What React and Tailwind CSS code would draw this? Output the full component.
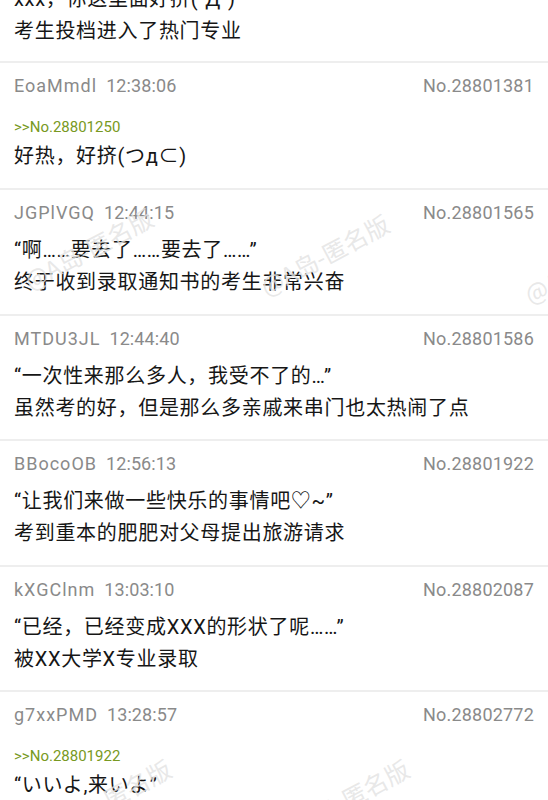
import React from "react";

const posts = [
  {
    name: "Hidden0",
    time: "12:30:00",
    no: "No.28801250",
    body: ["xxx，你这里面好挤(´Д`)", "考生投档进入了热门专业"],
    first: true,
  },
  {
    name: "EoaMmdl",
    time: "12:38:06",
    no: "No.28801381",
    quote: ">>No.28801250",
    body: ["好热，好挤(つд⊂)"],
  },
  {
    name: "JGPlVGQ",
    time: "12:44:15",
    no: "No.28801565",
    body: ["“啊……要去了……要去了……”", "终于收到录取通知书的考生非常兴奋"],
  },
  {
    name: "MTDU3JL",
    time: "12:44:40",
    no: "No.28801586",
    body: ["“一次性来那么多人，我受不了的…”", "虽然考的好，但是那么多亲戚来串门也太热闹了点"],
  },
  {
    name: "BBocoOB",
    time: "12:56:13",
    no: "No.28801922",
    body: ["“让我们来做一些快乐的事情吧♡~”", "考到重本的肥肥对父母提出旅游请求"],
  },
  {
    name: "kXGClnm",
    time: "13:03:10",
    no: "No.28802087",
    body: ["“已经，已经变成XXX的形状了呢……”", "被XX大学X专业录取"],
  },
  {
    name: "g7xxPMD",
    time: "13:28:57",
    no: "No.28802772",
    quote: ">>No.28801922",
    body: ["“いいよ,来いよ”"],
  },
];

const latin = { fontFamily: "Roboto, 'Noto Sans CJK SC', sans-serif" };

function Post({ p }) {
  const pad = p.first ? "pb-[14px]" : p.quote ? "pb-[16px]" : "pb-[15.5px]";
  return (
    <div
      className={
        (p.first ? "" : "border-t-2 border-[#eeeeee] ") + pad + " px-[14px] pt-[11px]"
      }
    >
      <div className="flex h-6 items-center justify-between text-[18px] leading-6 text-[#8a8a8a]">
        <div className="flex gap-[9px]">
          <span className="tracking-[1px]">{p.name}</span>
          <span className="tracking-[0.1px]">{p.time}</span>
        </div>
        <span className="tracking-[0.2px]">{p.no}</span>
      </div>
      {p.quote ? (
        <>
          <div className="mt-[19px] text-[15px] leading-5 text-[#789922]">{p.quote}</div>
          <div className="mt-[3px] text-[20px] leading-8 tracking-[0.7px] text-[#161616]">
            {p.body.map((b, i) => (
              <div key={i}>{b}</div>
            ))}
          </div>
        </>
      ) : (
        <div className="mt-[9px] text-[20px] leading-8 tracking-[0.7px] text-[#161616]">
          {p.body.map((b, i) => (
            <div key={i}>{b}</div>
          ))}
        </div>
      )}
    </div>
  );
}

function Watermark({ x, y, text }) {
  return (
    <div
      className="pointer-events-none absolute origin-left -rotate-[28deg] whitespace-nowrap text-[24px] text-[#e2e2e2]/80"
      style={{ left: x, top: y, fontFamily: "'Noto Sans CJK SC', sans-serif" }}
    >
      {text}
    </div>
  );
}

export default function App() {
  return (
    <div className="relative h-[800px] w-[548px] overflow-hidden bg-white" style={latin}>
      <div className="mt-[-61px]">
        {posts.map((p, i) => (
          <Post key={i} p={p} />
        ))}
      </div>
      <Watermark x={26} y={264} text="@A岛-匿名版" />
      <Watermark x={262} y={270} text="@A岛-匿名版" />
      <Watermark x={526} y={278} text="@A岛-匿名版" />
      <Watermark x={44} y={815} text="@A岛-匿名版" />
      <Watermark x={282} y={815} text="@A岛-匿名版" />
    </div>
  );
}
